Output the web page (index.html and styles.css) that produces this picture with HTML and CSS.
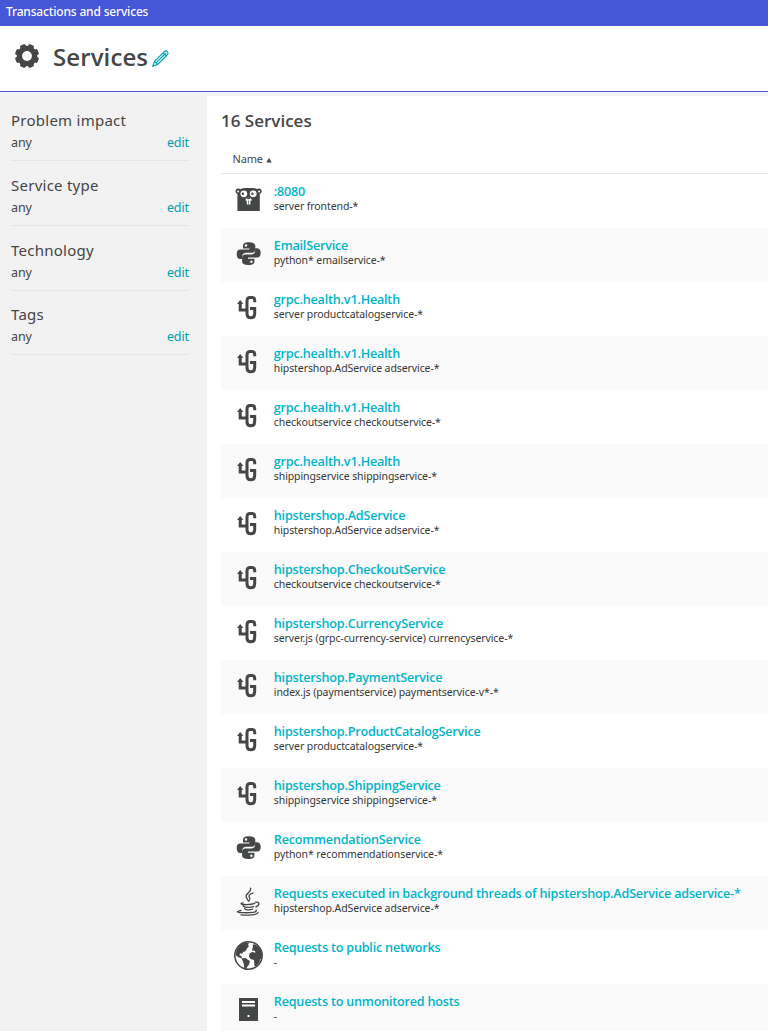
FILE: index.html
```html
<!DOCTYPE html>
<html lang="en">
<head>
<meta charset="utf-8">
<title>Services</title>
<link rel="stylesheet" href="styles.css">
</head>
<body>
<svg class="defs" width="0" height="0">
  <symbol id="grpc" viewBox="0 0 30 30"><path d="M20.700 9.300V7.200Q20.700 4.500 18 4.500H16Q13 4.500 13 7.800V20.800Q13 24.800 16.800 24.800Q20.700 24.800 20.700 20.800V15.500H16M13 17H6.200V10" fill="none" stroke="#454646" stroke-width="3"/><path d="M3 11 6.200 7 9.400 11z" fill="#454646"/></symbol>
  <symbol id="python" viewBox="0 0 30 30"><g id="snake"><path d="M15 3.200C10.500 3.200 9 4.500 9 7v2.500h6.400v1.100H6.300C3.700 10.600 2.700 12.700 2.700 15.200s1 4.800 3.400 4.800h2.200v-2.800c0-2.300 1.800-3.500 3.800-3.500h5.900c2 0 3.300-1.400 3.300-3.300V7c0-2.500-2.100-3.800-6.300-3.800z" fill="#454646"/><circle cx="12" cy="6.500" r="1.200" fill="#fff"/></g><use href="#snake" transform="rotate(180 14.700 14.600)"/></symbol>
</svg>
<div class="topbar">Transactions and services</div>
<header class="header">
  <svg class="gear" viewBox="0 0 24 24"><g fill="#454646"><circle cx="12" cy="12" r="10.300"/><g id="teeth"><rect x="9" y="0" width="6" height="24" rx="1.500" transform="rotate(22.5 12 12)"/><rect x="9" y="0" width="6" height="24" rx="1.500" transform="rotate(67.5 12 12)"/></g><use href="#teeth" transform="rotate(90 12 12)"/></g><circle cx="12" cy="12" r="4.900" fill="#fff"/></svg>
  <h1>Services</h1>
  <svg class="pencil" viewBox="0 0 17 17" fill="none" stroke="#00a1b2" stroke-width="1.150"><path d="M.8 16.200 2.600 11.400 12.500 1.500Q13.800.3 15.200 1.800T15.500 4.500L5.600 14.400zM2.600 11.400l3 3M4.100 12.900 14 3M11.200 2.800l3 3"/></svg>
</header>
<div class="body">
  <aside class="sidebar">
    <section class="filter"><h3>Problem impact</h3><div><span>any</span><a>edit</a></div></section>
    <section class="filter"><h3>Service type</h3><div><span>any</span><a>edit</a></div></section>
    <section class="filter"><h3>Technology</h3><div><span>any</span><a>edit</a></div></section>
    <section class="filter"><h3>Tags</h3><div><span>any</span><a>edit</a></div></section>
  </aside>
  <main class="main">
    <h2>16 Services</h2>
    <div class="thead">Name <svg viewBox="0 0 6 6"><path d="M.3 5.500 3 .8 5.700 5.500z" fill="#454646"/></svg></div>
    <div class="row"><svg viewBox="0 0 30 30"><g fill="#454646"><circle cx="4.400" cy="6.300" r="2.800"/><circle cx="24.800" cy="6.300" r="2.800"/><path d="M3.400 26V11Q3.400 3 11 3h7.500Q25.800 3 25.800 11v15z"/></g><g fill="#fff"><circle cx="4.100" cy="6.500" r="1"/><circle cx="25.100" cy="6.500" r="1"/><circle cx="9.800" cy="8.800" r="3.400"/><circle cx="19.200" cy="8.800" r="3.400"/><path d="M11.600 14q3-3 6 0v1.700h-1.200v3.800h-3.600v-3.800h-1.200z"/></g><g fill="#454646"><circle cx="8.900" cy="8.800" r="1.200"/><circle cx="18.400" cy="8.800" r="1.200"/><ellipse cx="14.600" cy="13.300" rx="1.600" ry=".9"/><path d="M14.300 15.500h.6v4h-.6z"/></g></svg><div><a>:8080</a><p>server frontend-*</p></div></div>
    <div class="row"><svg><use href="#python"/></svg><div><a>EmailService</a><p>python* emailservice-*</p></div></div>
    <div class="row"><svg><use href="#grpc"/></svg><div><a>grpc.health.v1.Health</a><p>server productcatalogservice-*</p></div></div>
    <div class="row"><svg><use href="#grpc"/></svg><div><a>grpc.health.v1.Health</a><p>hipstershop.AdService adservice-*</p></div></div>
    <div class="row"><svg><use href="#grpc"/></svg><div><a>grpc.health.v1.Health</a><p>checkoutservice checkoutservice-*</p></div></div>
    <div class="row"><svg><use href="#grpc"/></svg><div><a>grpc.health.v1.Health</a><p>shippingservice shippingservice-*</p></div></div>
    <div class="row"><svg><use href="#grpc"/></svg><div><a>hipstershop.AdService</a><p>hipstershop.AdService adservice-*</p></div></div>
    <div class="row"><svg><use href="#grpc"/></svg><div><a>hipstershop.CheckoutService</a><p>checkoutservice checkoutservice-*</p></div></div>
    <div class="row"><svg><use href="#grpc"/></svg><div><a>hipstershop.CurrencyService</a><p>server.js (grpc-currency-service) currencyservice-*</p></div></div>
    <div class="row"><svg><use href="#grpc"/></svg><div><a>hipstershop.PaymentService</a><p>index.js (paymentservice) paymentservice-v*-*</p></div></div>
    <div class="row"><svg><use href="#grpc"/></svg><div><a>hipstershop.ProductCatalogService</a><p>server productcatalogservice-*</p></div></div>
    <div class="row"><svg><use href="#grpc"/></svg><div><a>hipstershop.ShippingService</a><p>shippingservice shippingservice-*</p></div></div>
    <div class="row"><svg><use href="#python"/></svg><div><a>RecommendationService</a><p>python* recommendationservice-*</p></div></div>
    <div class="row"><svg viewBox="0 0 30 30" fill="none" stroke="#454646" stroke-width="1.300" stroke-linecap="round"><path d="M16.500 1.200c1.500 3.800-5.500 5.200-4.300 8.800.5 1.600 1.500 2.400 2.200 4.200M19 6c-3.800 1.300-5 2.800-3.500 4.700 1 1.300.3 2.500-.5 3.300"/><path d="M9 15.800c-3 .6-2.400 1.500 1 1.700 4 .2 8 0 10.800-1.100M21.500 15.200c4.500-.8 4.600 3.300.3 4.600M9.200 18.500c.5 2.300 7 2.200 10.300 1.200M10.500 21.500c.6 1.600 5.500 1.600 8 .6M7 23.500c-5.500 1-4.200 2 2.500 2.200 6.500.2 14.500-.4 12.500-2.500M7 27.800c7 .8 16 .2 17-2.200"/></svg><div><a>Requests executed in background threads of hipstershop.AdService adservice-*</a><p>hipstershop.AdService adservice-*</p></div></div>
    <div class="row"><svg viewBox="0 0 30 30"><circle cx="14.500" cy="14.500" r="13.700" fill="#fff" stroke="#454646" stroke-width="1.500"/><g fill="#454646"><path d="M2.500 9 6 4 11 1.500l4 .3-1 2.500 1 1-2 2-1.500 3-2 .5-1.500 2-2-.5-.5 2.200 2 .5.500 2.500L4 16l-2.500-2zM7.500 17.500l4-.5 2 1.500 2.500 1.500-1 3.500-2 2.500-.5 3-2-.5-.8-6z"/><path d="M19 5l-.5-1.500 3 0 4.500 4 2 5-.3 5-1.700 1-.5 3-3.500 4-1.500-.5-.5-6-3.500-1-1.500-2.500.5-3 2.500-1.500 3.500.8-.5-1.800-3-.5z"/></g></svg><div><a>Requests to public networks</a><p>-</p></div></div>
    <div class="row"><svg viewBox="0 0 30 30"><path d="M5 3h19v23H5z" fill="#454646"/><path d="M8 6h13v2H8zM8 9.500h13v2H8zM13.500 20h2v2h-2z" fill="#fff"/></svg><div><a>Requests to unmonitored hosts</a><p>-</p></div></div>
  </main>
</div>
</body>
</html>
```
FILE: styles.css
```css
* { box-sizing: border-box; }
body { margin: 0; height: 1031px; overflow: hidden; background: #f2f2f2; color: #454646; font-family: "Noto Sans", sans-serif; }
h1, h2, h3, p { margin: 0; }
.defs { display: block; height: 0; }
.topbar { height: 26px; padding-left: 6px; background: #4556d7; color: #fff; font: 500 12px/23px "Noto Sans", sans-serif; letter-spacing: -.17px; }
.header { display: flex; height: 66px; background: #fff; border-bottom: 1px solid #4556d7; padding-left: 15px; }
.gear { width: 24px; height: 24px; margin-top: 18px; }
h1 { margin-left: 14px; font: 600 24px/62px "Open Sans", sans-serif; letter-spacing: .1px; }
.pencil { width: 17px; height: 17px; margin: 24px 0 0 4px; }
.body { display: flex; height: 939px; }
.sidebar { width: 207px; padding: 16.3px 18px 0 11px; flex: none; }
.filter { height: 64.7px; }
.filter h3 { font-weight: 400; font-size: 15px; line-height: 25px; letter-spacing: .25px; }
.filter div { display: flex; justify-content: space-between; height: 28px; border-bottom: 1px solid #e6e6e6; font-size: 12.5px; line-height: 20px; letter-spacing: -.1px; }
.filter a { color: #00a1b2; }
.main { flex: 1; min-width: 0; margin-top: 4px; padding-left: 14px; background: #fff; }
h2 { height: 50px; font: 600 17px/50px "Open Sans", sans-serif; }
.thead { height: 28px; padding-left: 11.5px; border-bottom: 1px solid #e6e6e6; font-size: 11px; line-height: 26px; letter-spacing: -.2px; }
.thead svg { width: 6px; height: 6px; margin-left: 1px; }
.row { display: flex; height: 54px; padding: 9px 0 0 13px; }
.row:nth-child(even) { background: #fafafa; }
.row > svg { width: 30px; height: 30px; margin-top: 2px; flex: none; }
.row > div { margin-left: 9.8px; white-space: nowrap; }
.row a { display: block; color: #00b4cc; font: 600 12.6px/18px "Open Sans", sans-serif; letter-spacing: -.2px; }
.row p { margin-top: -1px; color: #363737; font-size: 10.5px; line-height: 13px; letter-spacing: -.09px; }
```
